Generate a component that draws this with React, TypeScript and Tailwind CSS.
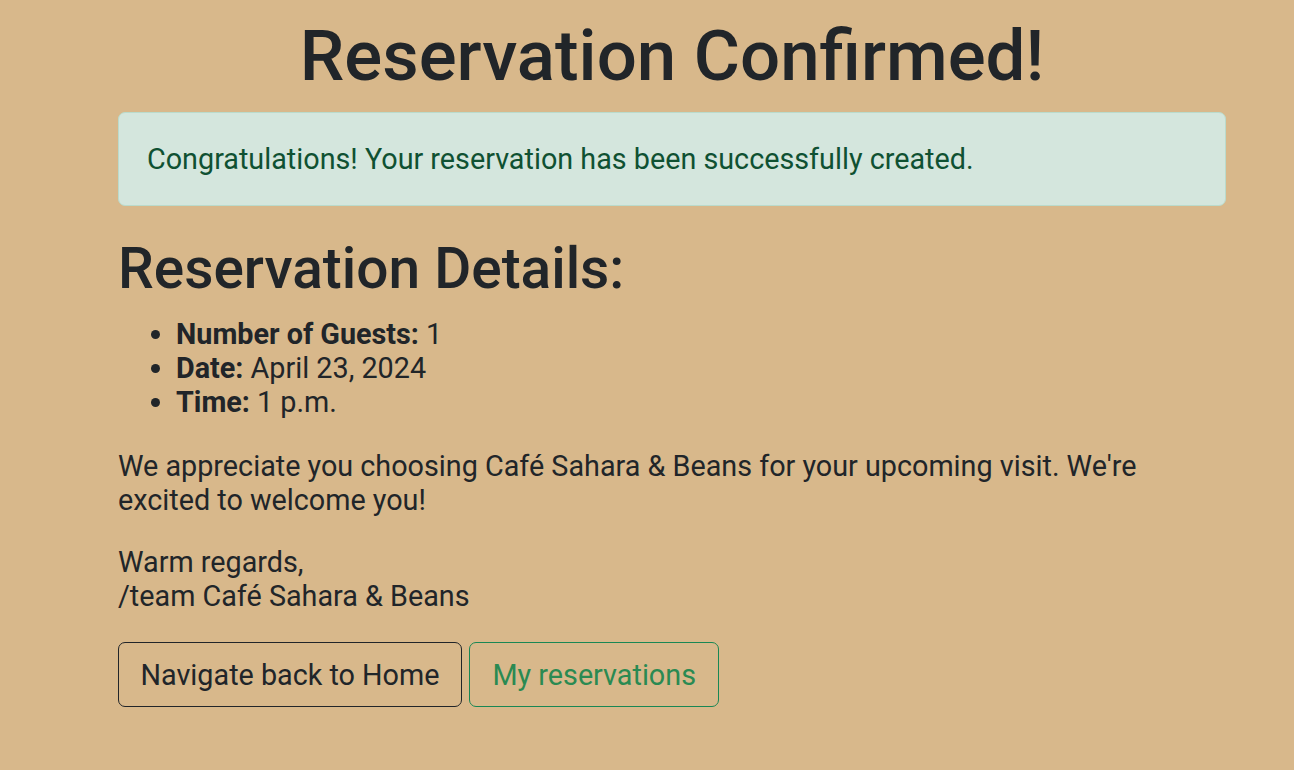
export default function App() {
  return (
    <div
      className="min-h-[770px] w-full bg-[#d8b88b] text-[#212529]"
      style={{ fontFamily: "Roboto, 'Liberation Sans', sans-serif" }}
    >
      <div className="ml-[118px] w-[1108px] pt-[14px]">
        <h1 className="text-center text-[70.8px] leading-[1.2] font-medium mb-[13px]">
          Reservation Confirmed!
        </h1>
        <div className="rounded-[7px] border border-[#badbcc] bg-[#d4e6dd] px-[28px] py-[29px] text-[28.75px] leading-[34px] text-[#0f5132]">
          Congratulations! Your reservation has been successfully created.
        </div>
        <h2 className="mt-[29px] text-[56.8px] leading-[1.2] font-medium">
          Reservation Details:
        </h2>
        <ul className="mt-[14px] list-disc pl-[58px] text-[28.75px] leading-[34px]">
          <li>
            <strong className="font-bold">Number of Guests:</strong> 1
          </li>
          <li>
            <strong className="font-bold">Date:</strong> April 23, 2024
          </li>
          <li>
            <strong className="font-bold">Time:</strong> 1 p.m.
          </li>
        </ul>
        <p className="mt-[30px] mb-[28px] text-[28.75px] leading-[34px]">
          We appreciate you choosing Café Sahara &amp; Beans for your upcoming visit. We're excited to welcome you!
        </p>
        <p className="mb-[29px] text-[28.75px] leading-[34px]">
          Warm regards,
          <br />
          /team Café Sahara &amp; Beans
        </p>
        <div className="flex gap-[7px]">
          <button className="rounded-[7px] border border-[#212529] px-[21.5px] py-[10.5px] text-[28.75px] leading-[42px] text-[#212529]">
            Navigate back to Home
          </button>
          <button className="rounded-[7px] border border-[#198754] px-[22.5px] py-[10.5px] text-[28.75px] leading-[42px] text-[#2a8a52]">
            My reservations
          </button>
        </div>
      </div>
    </div>
  );
}
